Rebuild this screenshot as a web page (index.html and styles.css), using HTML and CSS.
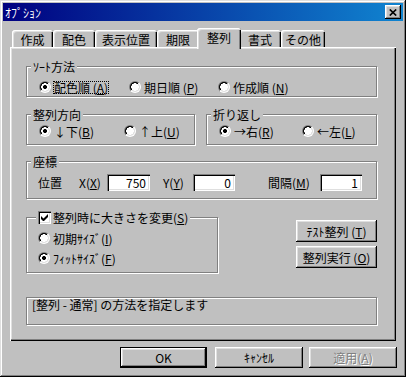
FILE: index.html
```html
<!DOCTYPE html>
<html lang="ja">
<head>
<meta charset="utf-8">
<title>ｵﾌﾟｼｮﾝ</title>
<link rel="stylesheet" href="styles.css">
</head>
<body>
<div class="window">
  <div class="titlebar">
    <span class="title">ｵﾌﾟｼｮﾝ</span>
    <span class="close"><svg width="8" height="7" viewBox="0 0 8 7"><path d="M0.8 0.5 L7.2 6.5 M7.2 0.5 L0.8 6.5" stroke="#000" stroke-width="1.7" fill="none"/></svg></span>
  </div>
  <div class="tabs">
    <div class="tab tw41">作成</div>
    <div class="tab tw42">配色</div>
    <div class="tab tw62">表示位置</div>
    <div class="tab tw42">期限</div>
    <div class="tab sel">整列</div>
    <div class="tab tw42">書式</div>
    <div class="tab tw44">その他</div>
  </div>
  <div class="panel">
    <div class="group g-sort">
      <div class="legend">ｿｰﾄ方法</div>
      <div class="opts">
        <div class="opt ow90"><span class="radio on"></span><span class="lbl focus">配色順 (<u>A</u>)</span></div>
        <div class="opt ow89"><span class="radio"></span><span class="lbl">期日順 (<u>P</u>)</span></div>
        <div class="opt"><span class="radio"></span><span class="lbl">作成順 (<u>N</u>)</span></div>
      </div>
    </div>
    <div class="row2">
      <div class="group g-dir">
        <div class="legend">整列方向</div>
        <div class="opts">
          <div class="opt ow85"><span class="radio on"></span><span class="lbl">↓下(<u>B</u>)</span></div>
          <div class="opt"><span class="radio"></span><span class="lbl">↑上(<u>U</u>)</span></div>
        </div>
      </div>
      <div class="group g-wrap">
        <div class="legend">折り返し</div>
        <div class="opts">
          <div class="opt ow83"><span class="radio on"></span><span class="lbl">→右(<u>R</u>)</span></div>
          <div class="opt"><span class="radio"></span><span class="lbl">←左(<u>L</u>)</span></div>
        </div>
      </div>
    </div>
    <div class="group g-coord">
      <div class="legend">座標</div>
      <div class="coords">
        <span class="cl cw41">位置</span>
        <span class="cl cw28">X(<u>X</u>)</span>
        <span class="field fw43">750</span>
        <span class="cl cw30 ml13">Y(<u>Y</u>)</span>
        <span class="field fw42">0</span>
        <span class="cl cw52 ml33">間隔(<u>M</u>)</span>
        <span class="field fw42">1</span>
      </div>
    </div>
    <div class="row3">
      <div class="group g-size">
        <div class="legend legend-check"><span class="check"><svg width="7" height="7" viewBox="0 0 7 7"><polygon points="0,2 2.5,4.5 7,0 7,3 2.5,7.5 0,5" fill="#000"/></svg></span>整列時に大きさを変更(<u>S</u>)</div>
        <div class="opt srow1"><span class="radio"></span><span class="lbl">初期ｻｲｽﾞ(<u>I</u>)</span></div>
        <div class="opt srow2"><span class="radio on"></span><span class="lbl">ﾌｨｯﾄｻｲｽﾞ(<u>F</u>)</span></div>
      </div>
      <div class="btncol">
        <div class="btn pbtn">ﾃｽﾄ整列 (<u>T</u>)</div>
        <div class="btn pbtn">整列実行 (<u>O</u>)</div>
      </div>
    </div>
    <div class="group status">[整列 - 通常] の方法を指定します</div>
  </div>
  <div class="footer">
    <div class="btn fbtn ok">OK</div>
    <div class="btn fbtn cancel">ｷｬﾝｾﾙ</div>
    <div class="btn fbtn apply disabled">適用(<u>A</u>)</div>
  </div>
</div>
</body>
</html>
```
FILE: styles.css
```css
* { box-sizing: border-box; }
html, body { margin: 0; padding: 0; }
body {
  width: 406px;
  height: 377px;
  overflow: hidden;
  background: #c0c0c0;
  font-family: "Noto Sans CJK JP", "Noto Sans", sans-serif;
  font-size: 12px;
  color: #000;
}
u { text-decoration: underline; text-underline-offset: 1px; }

.window {
  width: 406px;
  height: 377px;
  padding: 3px;
  background: #c0c0c0;
  box-shadow: inset -1px -1px #000, inset 1px 1px #dfdfdf, inset -2px -2px #808080, inset 2px 2px #fff;
}

.titlebar {
  height: 18px;
  display: flex;
  align-items: center;
  justify-content: space-between;
  padding: 0 2px;
  background: linear-gradient(90deg, #000080, #1084d0);
  color: #fff;
}
.title { font-size: 12px; line-height: 13px; }
.close {
  width: 16px;
  height: 14px;
  display: flex;
  align-items: center;
  justify-content: center;
  background: #c0c0c0;
  box-shadow: inset -1px -1px #000, inset 1px 1px #fff, inset -2px -2px #808080, inset 2px 2px #dfdfdf;
}

.tabs {
  display: flex;
  align-items: flex-end;
  height: 19px;
  margin: 7px 0 0 9px;
  position: relative;
  z-index: 1;
}
.tab {
  height: 17px;
  display: flex;
  align-items: center;
  justify-content: center;
  line-height: 13px;
  padding-top: 1px;
  background: #c0c0c0;
  border-radius: 3px 3px 0 0;
  box-shadow: inset 1px 1px #fff, inset 2px 2px #dfdfdf, inset -1px 0 #000, inset -2px 0 #808080;
}
.tw41 { width: 41px; }
.tw42 { width: 42px; }
.tw44 { width: 44px; }
.tw62 { width: 62px; }
.tab.sel {
  width: 44px;
  height: 21px;
  margin: 0 -2px -2px -2px;
  padding: 0 0 3px 0;
  position: relative;
  z-index: 2;
}

.panel {
  margin-left: 7px;
  width: 386px;
  height: 294px;
  padding: 19px 0 0 16px;
  box-shadow: inset 1px 1px #fff, inset -1px -1px #000, inset -2px -2px #808080, inset 2px 2px #dfdfdf;
}

.group {
  border: 1px solid #808080;
  box-shadow: inset 1px 1px #fff, 1px 1px #fff;
}
.legend {
  display: flex;
  align-items: center;
  width: max-content;
  height: 13px;
  line-height: 13px;
  margin: -7px 0 0 4px;
  padding: 0 2px;
  background: #c0c0c0;
}

.opts { display: flex; }
.opt { display: flex; align-items: center; height: 14px; }
.ow90 { width: 90px; }
.ow89 { width: 89px; }
.ow85 { width: 85px; }
.ow83 { width: 83px; }
.lbl {
  line-height: 11px;
  border: 1px dotted transparent;
  white-space: nowrap;
}
.lbl.focus { border-color: #000; }

.radio {
  flex: none;
  width: 12px;
  height: 12px;
  padding: 1px;
  margin-right: 2px;
  border-radius: 50%;
  background: linear-gradient(135deg, #808080 50%, #fff 50%);
}
.radio::before {
  content: "";
  display: block;
  width: 10px;
  height: 10px;
  border-radius: 50%;
  background: radial-gradient(circle, #fff 0 3.6px, transparent 3.9px), linear-gradient(135deg, #000 50%, #dfdfdf 50%);
}
.radio.on::before {
  background: radial-gradient(circle, #000 0 1.9px, #fff 2.2px 3.6px, transparent 3.9px), linear-gradient(135deg, #000 50%, #dfdfdf 50%);
}

.check {
  flex: none;
  width: 13px;
  height: 13px;
  margin-right: 2px;
  display: flex;
  align-items: center;
  justify-content: center;
  background: #fff;
  box-shadow: inset 1px 1px #808080, inset 2px 2px #000, inset -1px -1px #fff, inset -2px -2px #dfdfdf;
}

.g-sort { width: 351px; height: 31px; }
.g-sort .opts { margin-top: 7px; padding-left: 12px; }

.row2 { display: flex; margin-top: 17px; }
.g-dir { width: 169px; height: 31px; }
.g-wrap { width: 171px; height: 31px; margin-left: 11px; }
.g-dir .opts, .g-wrap .opts { margin-top: 3px; padding-left: 12px; }

.g-coord { width: 351px; height: 38px; margin-top: 16px; }
.coords {
  display: flex;
  align-items: center;
  height: 17px;
  margin-top: 6px;
  padding-left: 11px;
}
.cl { white-space: nowrap; line-height: 13px; }
.cw41 { width: 41px; }
.cw28 { width: 28px; }
.cw30 { width: 30px; }
.cw52 { width: 52px; }
.ml13 { margin-left: 13px; }
.ml33 { margin-left: 33px; }
.field {
  height: 17px;
  line-height: 17px;
  text-align: right;
  padding-right: 4px;
  background: #fff;
  box-shadow: inset 1px 1px #808080, inset 2px 2px #000, inset -1px -1px #fff, inset -2px -2px #dfdfdf;
}
.fw43 { width: 43px; }
.fw42 { width: 42px; }

.row3 { display: flex; width: 351px; margin-top: 18px; }
.g-size { width: 192px; height: 56px; }
.legend-check { margin-left: 9px; }
.g-size .opt { padding-left: 11px; }
.srow1 { margin-top: 7px; }
.srow2 { margin-top: 6px; }

.btncol {
  margin-left: auto;
  margin-top: 3px;
  display: flex;
  flex-direction: column;
  gap: 4px;
}
.btn {
  display: flex;
  align-items: center;
  justify-content: center;
  white-space: nowrap;
  line-height: 13px;
  background: #c0c0c0;
  box-shadow: inset -1px -1px #000, inset 1px 1px #fff, inset -2px -2px #808080, inset 2px 2px #dfdfdf;
}
.pbtn { width: 81px; height: 22px; }

.status {
  width: 351px;
  height: 28px;
  margin-top: 24px;
  padding-left: 5px;
  line-height: 13px;
}

.footer {
  display: flex;
  justify-content: flex-end;
  margin-top: 6px;
  padding-right: 6px;
}
.fbtn { height: 21px; }
.ok {
  width: 87px;
  margin-right: 8px;
  border: 1px solid #000;
}
.cancel { width: 88px; margin-right: 6px; }
.apply { width: 88px; }
.disabled { color: #808080; text-shadow: 1px 1px #fff; }
```
